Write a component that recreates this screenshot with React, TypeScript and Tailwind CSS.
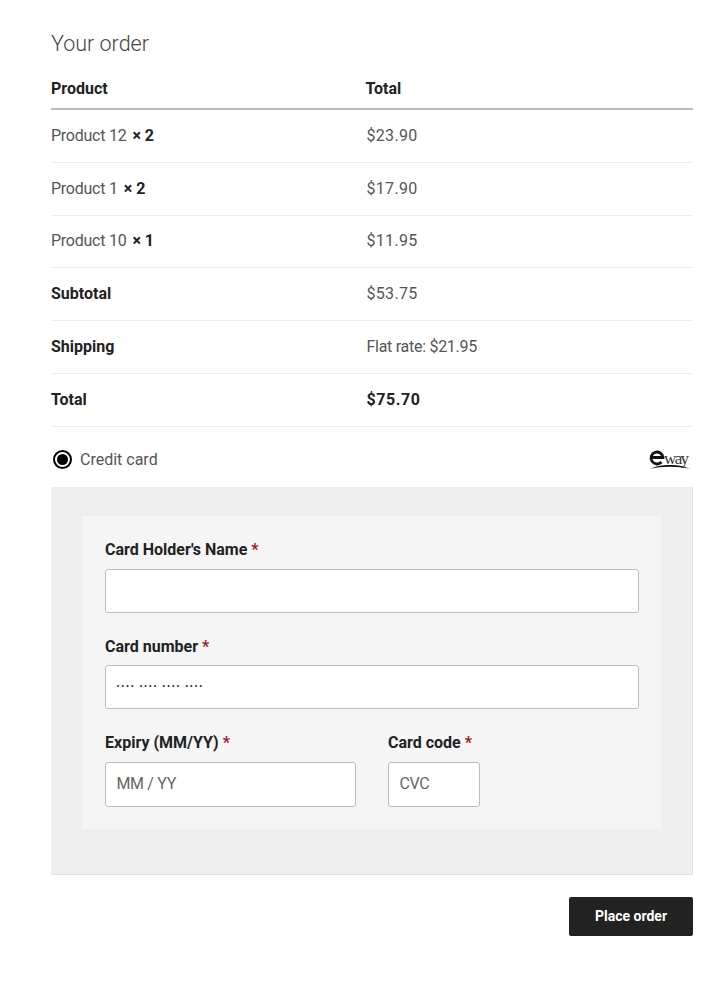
const font = "font-['Roboto',Arial,sans-serif]";

function Row({ left, right, boldRight, small }: { left: React.ReactNode; right: string; boldRight?: boolean; small?: boolean }) {
  return (
    <div className="flex h-[52.8px] items-center border-b border-[#eeeeee] text-[16px] leading-[24px] text-[#555555]">
      <div className="w-[315.5px] shrink-0">{left}</div>
      <div className={boldRight ? "font-bold tracking-[0.6px] text-[#222222]" : small ? "tracking-[-0.28px]" : "tracking-[0.3px]"}>{right}</div>
    </div>
  );
}

function Item({ name, qty }: { name: string; qty: number }) {
  return (
    <span className="tracking-[-0.25px]">
      {name}
      <b className="ml-[6px] font-bold tracking-normal text-[#222222]">× {qty}</b>
    </span>
  );
}

function Label({ text }: { text: string }) {
  return (
    <div className="h-[25px] text-[16px] leading-[25px] font-bold text-[#222222]">
      {text} <span className="text-[#a0172b]">*</span>
    </div>
  );
}

function Field({ className, text, dots }: { className: string; text?: string; dots?: boolean }) {
  return (
    <div className={`flex items-center rounded-[3px] border border-[#bbbbbb] bg-white px-[10.5px] text-[16px] tracking-[-0.35px] text-[#666666] ${className}`}>
      {dots ? <span className="text-[9px] tracking-[1.7px] text-[#222222]">•••• •••• •••• ••••</span> : text}
    </div>
  );
}

export default function App() {
  return (
    <div className={`min-h-[1000px] w-[721px] bg-white pt-[30px] pr-[28px] pl-[51px] ${font}`}>
      <h3 className="h-[29px] text-[21.5px] leading-[28px] font-light text-[#444444]">Your order</h3>
      <div className="mt-[10px] flex h-[41px] items-center border-b-2 border-[#bbbbbb] text-[16px] font-bold text-[#222222]">
        <div className="w-[314.5px] shrink-0">Product</div>
        <div>Total</div>
      </div>
      <Row left={<Item name="Product 12" qty={2} />} right="$23.90" />
      <Row left={<Item name="Product 1" qty={2} />} right="$17.90" />
      <Row left={<Item name="Product 10" qty={1} />} right="$11.95" />
      <Row left={<b className="font-bold text-[#222222]">Subtotal</b>} right="$53.75" />
      <Row left={<b className="font-bold text-[#222222]">Shipping</b>} right="Flat rate: $21.95" small />
      <Row left={<b className="font-bold text-[#222222]">Total</b>} right="$75.70" boldRight />

      <div className="flex h-[60.2px] items-center justify-between pt-[6px]">
        <div className="flex items-center">
          <span className="ml-[2px] flex size-[19px] items-center justify-center rounded-full border-2 border-black bg-white">
            <span className="size-[11px] rounded-full bg-black" />
          </span>
          <span className="mt-[1px] ml-[8px] text-[16px] text-[#555555]">Credit card</span>
        </div>
        <svg width="44" height="22" viewBox="0 0 44 22" className="mr-[1px] -mt-[2px]">
          <path d="M3 9.5h12A6 6 0 1 0 13.5 14" fill="none" stroke="#111" strokeWidth="2.8" />
          <text x="16" y="16" fontFamily="'Liberation Serif',serif" fontSize="17" letterSpacing="-1.6" fill="#333">way</text>
          <path d="M2 21C12 15.5 32 15.5 42 21C32 18 12 18 2 21Z" fill="#111" />
        </svg>
      </div>

      <div className="h-[388px] w-[642px] border-r border-b border-[#e2e2e2] bg-[#eeeeee] pt-[29px] pl-[31px]">
        <div className="h-[313px] w-[579px] bg-[#f5f5f5] px-[23px] pt-[21px]">
          <Label text="Card Holder's Name" />
          <Field className="mt-[7px] h-[44px] w-[534px]" />
          <div className="mt-[21px]"><Label text="Card number" /></div>
          <Field className="mt-[6px] h-[44px] w-[534px]" dots />
          <div className="mt-[21px] flex">
            <div className="w-[283px]">
              <Label text="Expiry (MM/YY)" />
              <Field className="mt-[7px] h-[45px] w-[251px]" text="MM / YY" />
            </div>
            <div>
              <Label text="Card code" />
              <Field className="mt-[7px] h-[45px] w-[92px]" text="CVC" />
            </div>
          </div>
        </div>
      </div>

      <div className="mt-[22px] flex w-[642px] justify-end">
        <div className="flex h-[39px] w-[124px] items-center justify-center rounded-[2px] bg-[#222222] text-[14px] font-bold text-white">
          Place order
        </div>
      </div>
    </div>
  );
}
